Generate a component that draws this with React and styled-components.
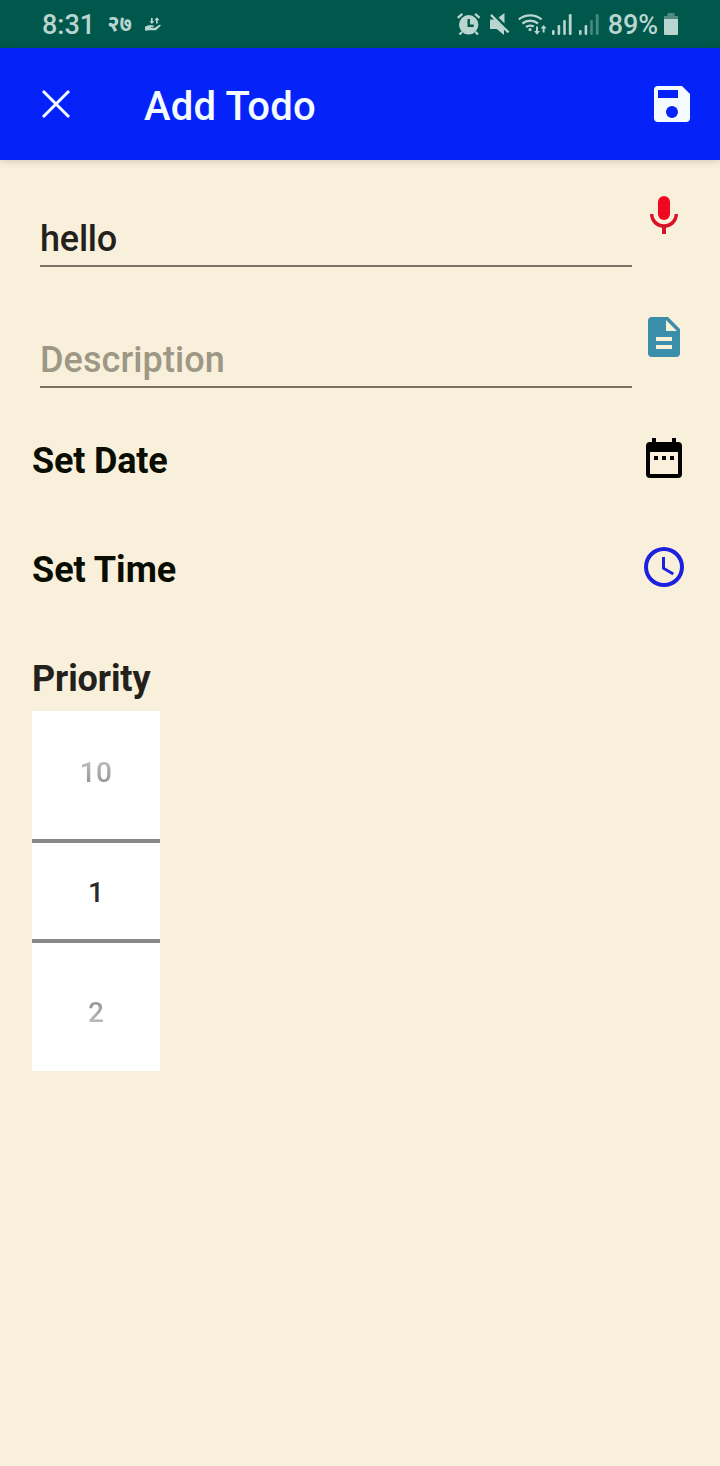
import React from "react";
import styled, { createGlobalStyle } from "styled-components";

const GlobalStyle = createGlobalStyle`
  * { box-sizing: border-box; }
  body { margin: 0; background: #f9f0dc; font-family: Roboto, "Noto Sans", sans-serif; }
  svg { display: block; flex: none; }
`;

const Screen = styled.div`
  display: flex;
  flex-direction: column;
  width: 720px;
  height: 1466px;
  overflow: hidden;
  background: #f9f0dc;
`;

const StatusBar = styled.div`
  display: flex;
  align-items: center;
  justify-content: space-between;
  height: 48px;
  padding: 0 41px 0 42px;
  background: #00574b;
  color: #b9d5d0;
`;

const StatusGroup = styled.div`
  display: flex;
  align-items: center;
`;

const StatusText = styled.span`
  font-size: 27px;
  line-height: 48px;
  font-weight: 500;
  letter-spacing: ${(p) => p.$spacing || 0}px;
  margin-left: ${(p) => p.$gap || 0}px;
  padding-top: 2px;
`;

const DateText = styled.span`
  width: 24px;
  margin-left: 12px;
  font-size: 22px;
  line-height: 46px;
  font-weight: 700;
`;

const Toolbar = styled.header`
  display: flex;
  align-items: center;
  height: 112px;
  padding: 0 24px 0 32px;
  background: #0523f8;
  color: #f3fbff;
  box-shadow: 0 2px 7px rgba(0, 0, 0, 0.14);
`;

const Title = styled.h1`
  flex: 1;
  margin: 6px 0 0 64px;
  font-size: 40px;
  line-height: 48px;
  font-weight: 500;
  letter-spacing: 0.2px;
`;

const Form = styled.main`
  display: flex;
  flex-direction: column;
  padding: 32px 32px 0;
`;

const FieldRow = styled.div`
  display: flex;
  justify-content: space-between;
  height: ${(p) => p.$height}px;
`;

const Field = styled.div`
  display: flex;
  align-items: flex-end;
  width: 592px;
  height: 75px;
  margin-left: 8px;
  padding-bottom: 5px;
  border-bottom: 2px solid #7a7164;
  font-size: 36px;
  line-height: 42px;
  font-weight: 500;
  letter-spacing: ${(p) => p.$spacing || 0}px;
  color: ${(p) => (p.$hint ? "#9d9785" : "#23211c")};
`;

const Label = styled.div`
  font-size: 36px;
  line-height: 42px;
  font-weight: 700;
  letter-spacing: ${(p) => p.$spacing || 0}px;
  margin-top: ${(p) => p.$top || 0}px;
  color: ${(p) => p.$color || "#0a0e02"};
`;

const Picker = styled.div`
  display: flex;
  flex-direction: column;
  width: 128px;
  height: 360px;
  margin-top: 11px;
  background: #fff;
`;

const PickerCell = styled.div`
  display: flex;
  align-items: center;
  justify-content: center;
  height: ${(p) => (p.$selected ? 104 : 128)}px;
  padding: ${(p) => p.$pad || "0"};
  border: solid #888;
  border-width: ${(p) => (p.$selected ? "4px 0" : "0")};
`;

const PickerValue = styled.span`
  font-size: 28px;
  line-height: 33px;
  font-weight: 500;
  letter-spacing: 0.3px;
  color: ${(p) => (p.$fade ? "transparent" : "#2a2a2a")};
  background: ${(p) => (p.$fade ? `linear-gradient(${p.$fade}, #bcbcbc 15%, #949494 85%)` : "none")};
  -webkit-background-clip: text;
  background-clip: text;
`;

const Icon = ({ d, color, children }) => (
  <svg width="48" height="48" viewBox="0 0 24 24" fill={color}>
    {d && <path d={d} fillRule="evenodd" />}
    {children}
  </svg>
);

const HandIconSvg = styled.svg`
  margin: 1px 0 0 14px;
`;

const HandIcon = () => (
  <HandIconSvg width="16" height="15" viewBox="0 0 16 15" fill="#b9d5d0">
    <path d="M0 9.8l3.2-1.6h4.3c1.4 0 1.6 1.6.4 1.8H6v.7h4l4-2.8c1.2-.7 2.2.4 1.5 1.2L11 13.2H4.5L0 13.8z" />
    <path d="M6 1h1.7v3.3h1.6L6.9 7 4.4 4.3H6zM11 6.6h1.7V3.2h1.8L11.9.3 9.3 3.2H11z" />
  </HandIconSvg>
);

const StatusIcons = () => (
  <svg width="144" height="26" viewBox="456 11 144 26" fill="#b9d5d0">
    <circle cx="468.7" cy="24.8" r="9.7" />
    <path d="M457.8 17.8l4.5-4M475.1 13.8l4.5 4M462 32l-2.5 2.5M475.5 32l2.5 2.5" stroke="#b9d5d0" strokeWidth="2.4" />
    <path d="M468.7 19v6.8h5" fill="none" stroke="#00574b" strokeWidth="2.4" />
    <path d="M490 19.5h4.6l9.4 9.4v6l-7.3-6H490zM498.5 17.5l6-4.5v10.5z" />
    <path d="M491 14.8l17.5 17.5" fill="none" stroke="#b9d5d0" strokeWidth="2.4" />
    <path d="M493.6 14.4l14.5 14.5" fill="none" stroke="#00574b" strokeWidth="1.6" />
    <g fill="none" stroke="#b9d5d0" strokeWidth="2.3">
      <path d="M518.8 19.4a18.3 18.3 0 0 1 22.8 0M522.4 23.5a12.5 12.5 0 0 1 15.6 0M526 27a7.4 7.4 0 0 1 7.8-.4" />
    </g>
    <circle cx="530" cy="29.6" r="1.6" />
    <path d="M536 26.5h2V31h2l-3 3.8-3-3.8h2zM542.6 32.5h2V28.6h2l-3-3.6-3 3.6h2z" />
    <rect x="552" y="30" width="2.6" height="5" rx="1.2" />
    <rect x="557.6" y="25" width="2.6" height="10" rx="1.2" />
    <rect x="563.2" y="20" width="2.6" height="15" rx="1.2" />
    <rect x="568.8" y="14" width="2.8" height="21" rx="1.2" />
    <rect x="579" y="30" width="2.6" height="5" rx="1.2" />
    <rect x="584.6" y="25" width="2.6" height="10" rx="1.2" />
    <g opacity=".4">
      <rect x="590.2" y="20" width="2.6" height="15" rx="1.2" />
      <rect x="595.8" y="14" width="2.8" height="21" rx="1.2" />
    </g>
  </svg>
);

const BatterySvg = styled.svg`
  margin-left: 6px;
`;

const Battery = () => (
  <BatterySvg width="15" height="22" viewBox="0 0 15 22">
    <path d="M3.5 0h7v3H14v3H0V3h3.5z" fill="#4f8b82" />
    <path d="M0 6h14v15a1 1 0 0 1-1 1H1a1 1 0 0 1-1-1z" fill="#b9d5d0" />
  </BatterySvg>
);

export default function App() {
  return (
    <Screen>
      <GlobalStyle />
      <StatusBar>
        <StatusGroup>
          <StatusText>8:31</StatusText>
          <DateText>२७</DateText>
          <HandIcon />
        </StatusGroup>
        <StatusGroup>
          <StatusIcons />
          <StatusText $gap={8} $spacing={-0.1}>89%</StatusText>
          <Battery />
        </StatusGroup>
      </StatusBar>
      <Toolbar>
        <svg width="48" height="48" viewBox="0 0 48 48" fill="none" stroke="#f3fbff" strokeWidth="3">
          <path d="M11 11l26 26M37 11L11 37" />
        </svg>
        <Title>Add Todo</Title>
        <Icon color="#f3fbff" d="M17 3H5a2 2 0 0 0-2 2v14a2 2 0 0 0 2 2h14a2 2 0 0 0 2-2V7l-4-4zM12 19a3 3 0 1 1 0-6 3 3 0 0 1 0 6zM15 9H5V5h10v4z" />
      </Toolbar>
      <Form>
        <FieldRow $height={121}>
          <Field $spacing={-0.2}>hello</Field>
          <Icon color="#e50a22">
            <rect x="9" y="2" width="6" height="12" rx="3" fill="#ee0820" />
            <path fill="#d81428" d="M19 11c0 3.53-2.61 6.43-6 6.92V21h-2v-3.08c-3.39-.49-6-3.39-6-6.92h1.7c0 3 2.54 5.1 5.3 5.1s5.3-2.1 5.3-5.1H19z" />
          </Icon>
        </FieldRow>
        <FieldRow $height={123}>
          <Field $hint $spacing={0.1}>Description</Field>
          <Icon color="#3b8ea9" d="M14 2H6a2 2 0 0 0-2 2v16a2 2 0 0 0 2 2h12a2 2 0 0 0 2-2V8l-6-6zM16 18H8v-2h8v2zM16 14H8v-2h8v2zM13 9V3.5L18.5 9H13z" />
        </FieldRow>
        <FieldRow $height={107}>
          <Label $top={4} $spacing={-0.2}>Set Date</Label>
          <Icon color="#000" d="M19 3h-1V1h-2v2H8V1H6v2H5a2 2 0 0 0-2 2v14a2 2 0 0 0 2 2h14a2 2 0 0 0 2-2V5a2 2 0 0 0-2-2zM19 19H5V8h14v11zM7 10h2v2H7zM11 10h2v2h-2zM15 10h2v2h-2z" />
        </FieldRow>
        <FieldRow $height={115}>
          <Label $top={6}>Set Time</Label>
          <Icon color="#1c20df" d="M12 2a10 10 0 1 0 0 20 10 10 0 0 0 0-20zM12 20a8 8 0 1 1 0-16 8 8 0 0 1 0 16zM12.5 7H11v6l5.25 3.15.75-1.23-4.5-2.67V7z" />
        </FieldRow>
        <Label $color="#23211c" $spacing={-0.1}>Priority</Label>
        <Picker>
          <PickerCell $pad="0 0 6px">
            <PickerValue $fade="to bottom">10</PickerValue>
          </PickerCell>
          <PickerCell $selected $pad="2px 0 0">
            <PickerValue>1</PickerValue>
          </PickerCell>
          <PickerCell $pad="10px 0 0">
            <PickerValue $fade="to top">2</PickerValue>
          </PickerCell>
        </Picker>
      </Form>
    </Screen>
  );
}
